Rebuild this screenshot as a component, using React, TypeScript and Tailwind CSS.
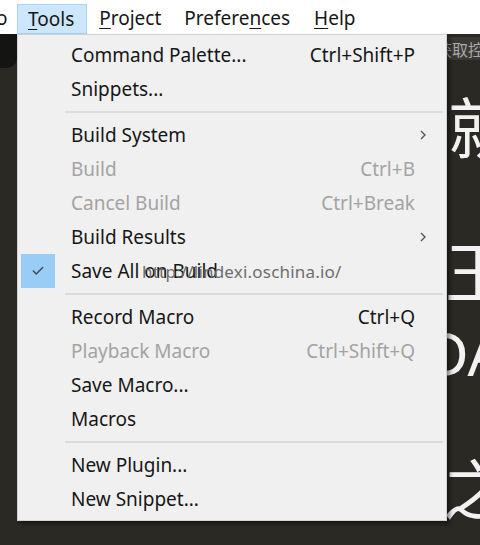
import { Check } from "lucide-react";

type Item = {
  label: string;
  shortcut?: string;
  disabled?: boolean;
  submenu?: boolean;
  checked?: boolean;
};

const groups: Item[][] = [
  [{ label: "Command Palette...", shortcut: "Ctrl+Shift+P" }, { label: "Snippets..." }],
  [
    { label: "Build System", submenu: true },
    { label: "Build", shortcut: "Ctrl+B", disabled: true },
    { label: "Cancel Build", shortcut: "Ctrl+Break", disabled: true },
    { label: "Build Results", submenu: true },
    { label: "Save All on Build", checked: true },
  ],
  [
    { label: "Record Macro", shortcut: "Ctrl+Q" },
    { label: "Playback Macro", shortcut: "Ctrl+Shift+Q", disabled: true },
    { label: "Save Macro..." },
    { label: "Macros" },
  ],
  [{ label: "New Plugin..." }, { label: "New Snippet..." }],
];

const font = { fontFamily: '"Noto Sans", "Noto Sans CJK SC", sans-serif' };
const cjk = { fontFamily: '"Noto Sans CJK SC", sans-serif' };

function MenuRow({ item }: { item: Item }) {
  const color = item.disabled ? "text-[#a3a3a3]" : "text-[#161616]";
  return (
    <div className="relative flex h-[34px] items-center pl-[53px] pr-[31px]">
      {item.checked && (
        <div className="absolute left-[3px] top-0 flex h-[34px] w-[34px] items-center justify-center bg-[#99cdf5]">
          <Check size={14} strokeWidth={2.5} className="text-[#3c4a57]" />
        </div>
      )}
      <span className={`flex-1 ${color}`}>{item.label}</span>
      {item.shortcut && <span className={color}>{item.shortcut}</span>}
      {item.submenu && (
        <svg width="8" height="12" viewBox="0 0 8 12" className="absolute right-[19px] top-[11px]">
          <path d="M2 2 L6 6 L2 10" fill="none" stroke="#555" strokeWidth="1.4" />
        </svg>
      )}
    </div>
  );
}

export default function App() {
  return (
    <div className="relative h-[545px] w-[480px] overflow-hidden bg-[#2a2924] text-[19px]" style={font}>
      {/* Menu bar */}
      <div className="flex h-[34px] items-center bg-white pt-[3px] text-[#161616]">
        <span className="-ml-[4px] w-[21px]">o</span>
        <div className="mt-[1px] flex h-[30px] items-center self-start border border-[#a9d4f7] bg-[#cce6fb] pl-[10px] pr-[12px]">
          <span><span className="underline underline-offset-[3px]">T</span>ools</span>
        </div>
        <span className="ml-[12px]"><span className="underline underline-offset-[3px]">P</span>roject</span>
        <span className="ml-[23px]">Prefere<span className="underline underline-offset-[3px]">n</span>ces</span>
        <span className="ml-[24px]"><span className="underline underline-offset-[3px]">H</span>elp</span>
      </div>

      {/* Editor behind */}
      <div className="flex h-[511px]">
        <div className="w-[17px]">
          <div className="h-[34px] rounded-br-[10px] bg-[#141413]" />
        </div>
        <div className="flex-1" />
        <div className="w-[33px] overflow-hidden">
          <div className="mt-[3px] flex h-[23px] items-center whitespace-nowrap bg-[#3a3935] text-[16px] text-[#a9a9a9]" style={cjk}>
            <span className="ml-[-11px]">获取控件</span>
          </div>
          <div className="whitespace-nowrap text-[66px] leading-none text-[#f2f2f2]" style={cjk}>
            <div className="ml-[1px] mt-[31px]">就</div>
            <div className="ml-[-2px] mt-[78px]">王</div>
            <div className="ml-[-22px] mt-[22px] text-[60px]" style={font}>DA</div>
            <div className="ml-[-4px] mt-[70px]">之</div>
          </div>
        </div>
      </div>

      {/* Tools dropdown */}
      <div className="absolute left-[17px] top-[34px] w-[430px] border border-[#d2d2d2] bg-[#f0f0f0] pb-[4px] pt-[3px] shadow-[3px_3px_4px_rgba(0,0,0,0.45)]">
        {groups.map((g, gi) => (
          <div key={gi}>
            {gi > 0 && (
              <div className="flex h-[12px] items-center pl-[47px] pr-[3px]">
                <div className="h-[2px] flex-1 bg-[#dcdcdc]" />
              </div>
            )}
            {g.map((item) => (
              <MenuRow key={item.label} item={item} />
            ))}
          </div>
        ))}
      </div>

      {/* watermark */}
      <div className="absolute left-[142px] top-[259px] text-[17px] tracking-[0.2px] text-[#6e6e6e]" style={font}>
        http://lindexi.oschina.io/
      </div>
    </div>
  );
}
